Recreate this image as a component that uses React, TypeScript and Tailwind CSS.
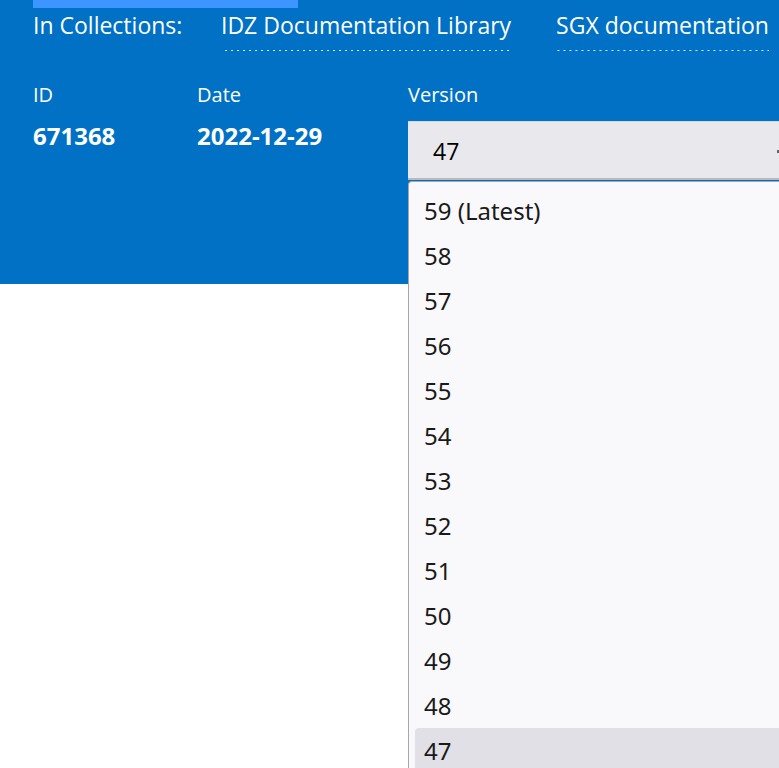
const versions = ["59 (Latest)", "58", "57", "56", "55", "54", "53", "52", "51", "50", "49", "48", "47"];

const dotted =
  "bg-[linear-gradient(to_right,rgba(255,255,255,0.85)_2px,transparent_2px)] bg-[length:6px_1px] bg-bottom bg-repeat-x pb-[11px]";

export default function App() {
  return (
    <div className="relative min-h-[768px] w-[779px] overflow-hidden bg-white" style={{ fontFamily: "'Open Sans', 'Noto Sans', sans-serif" }}>
      <div className="h-[284px] bg-[#0071c5] pl-[33px] text-white">
        <div className="h-[8px] w-[265px] bg-[#3d96ff]" />
        <div className="mt-[2px] flex items-start whitespace-nowrap text-[23px] leading-[30px]">
          <span className="w-[188px] shrink-0">In Collections:</span>
          <a className={dotted}>IDZ Documentation Library</a>
          <a className={`ml-[45px] ${dotted}`}>SGX documentation</a>
        </div>
        <div className="mt-[32px] flex">
          <div className="w-[164px] shrink-0">
            <div className="text-[20px] leading-[24px]">ID</div>
            <div className="mt-[14px] text-[24px] font-bold leading-[30px]">671368</div>
          </div>
          <div className="w-[211px] shrink-0">
            <div className="text-[20px] leading-[24px]">Date</div>
            <div className="mt-[14px] text-[24px] font-bold leading-[30px]">2022-12-29</div>
          </div>
          <div className="shrink-0">
            <div className="text-[20px] leading-[24px]">Version</div>
            <div className="mt-[14px] flex h-[59px] w-[400px] items-center border-t border-[#d9d9de] bg-[#e9e8ed] pl-[25px] text-[23px] text-black shadow-[inset_0_-2px_0_#b9b9bf]">
              47
              <span className="ml-auto mr-[29px] h-[3px] w-[2px] bg-[#666]" />
            </div>
          </div>
        </div>
      </div>

      <div className="absolute left-[408px] top-[181px] h-[600px] w-[400px] rounded-tl-[4px] border-l border-t border-[#a7a7ab] bg-[#f9f9fb] pl-[6px] pt-[6px]" style={{ fontFamily: "'Noto Sans', 'Open Sans', sans-serif" }}>
        {versions.map((v) => (
          <div
            key={v}
            className={`flex h-[45px] items-center rounded-[4px] pl-[9px] text-[24px] text-[#1a1a1a] ${v === "47" ? "bg-[#e1e0e6]" : ""}`}
          >
            {v}
          </div>
        ))}
      </div>
    </div>
  );
}
